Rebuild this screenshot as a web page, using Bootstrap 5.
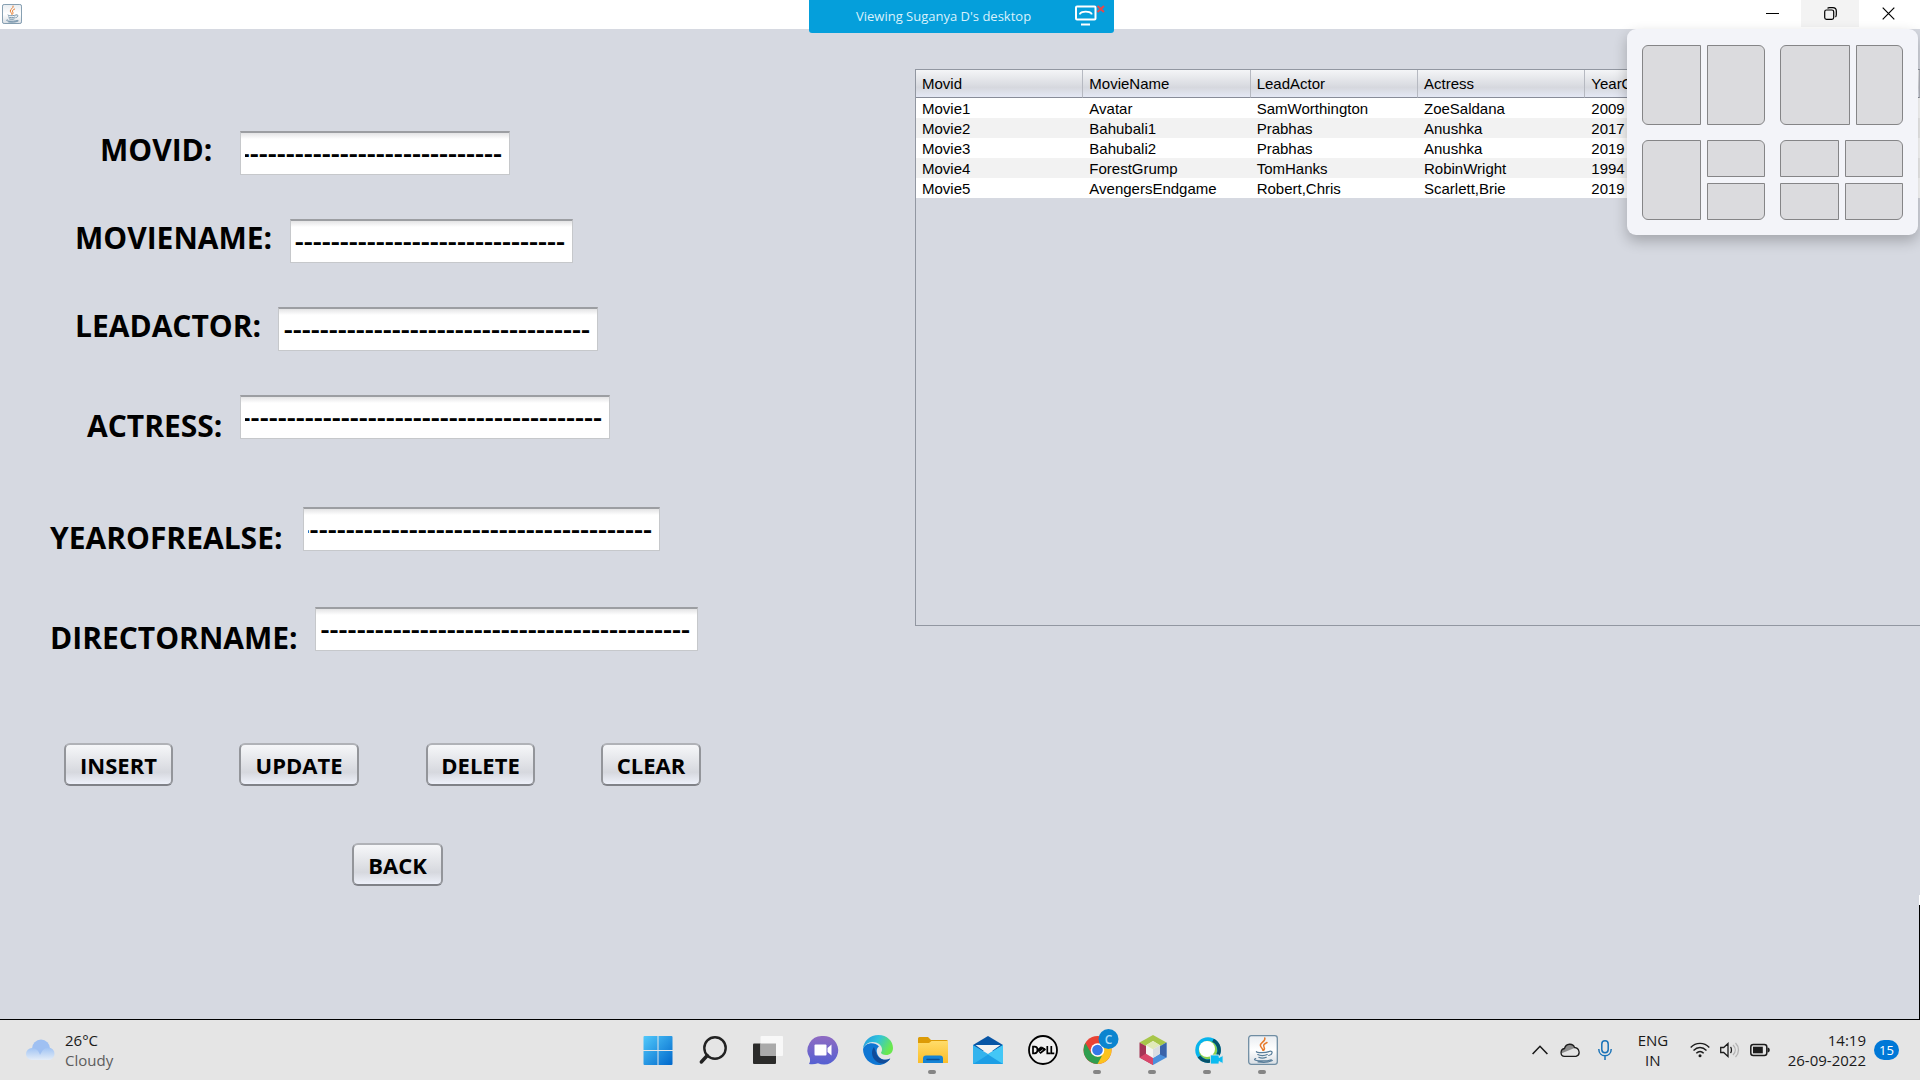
<!DOCTYPE html>
<html lang="en">
<head>
<meta charset="utf-8">
<meta name="viewport" content="width=device-width, initial-scale=1">
<title>Movie records</title>
<link href="https://cdn.jsdelivr.net/npm/bootstrap@5.3.0/dist/css/bootstrap.min.css" rel="stylesheet">
<style>
  body { background: #d6d9e1; color: #000; font-family: "Open Sans", "Noto Sans", sans-serif; }
  .titlebar { height: 29px; background: #fff; padding-left: 2px; padding-right: 3px; }
  .win-btn { width: 58px; height: 27px; border: 0; background: transparent; padding: 0; }
  .win-btn.hovered { background: #f3f3f3; }
  .share-bar { width: 305px; height: 33px; top: 0; left: 50%; margin-left: -151px; background: #059fdb; border-radius: 0 0 3px 3px; z-index: 3; color: #d9f1fb; font: 13px/33px "Open Sans", sans-serif; padding-left: 47px; padding-right: 8px; }

  /* right edge shows a strip of the screen behind the window */
  .workspace { background: linear-gradient(#fff 0 10px, #000 10px) right bottom / 1px 124px no-repeat; border-bottom: 1px solid #000; }
  .form-side { width: 915px; padding-top: 102px; }
  .entry { height: 44px; margin-bottom: 44px; }
  .entry label { font-size: 30px; font-weight: 700; line-height: 38px; white-space: nowrap; }
  .entry.low label { padding-top: 12px; }
  .entry input { height: 44px; border: 1px solid #c6c8cb; border-top: 2px solid #9c9ea2; border-radius: 0; background: linear-gradient(#e4e4e5, #fff 6px); padding: 0 7px 4px 4px; font: 600 28px/36px "Open Sans", "Noto Sans", sans-serif; color: #000; }
  .at-101 { padding-left: 100px; } .at-101 label { width: 140px; }
  .at-76 { padding-left: 75px; }
  .name label { width: 215px; }
  .actor label { width: 203px; }
  .at-87 { padding-left: 87px; } .at-87 label { width: 153px; }
  .at-50 { padding-left: 50px; }
  .year { margin-bottom: 56px; } .year label { width: 253px; }
  .actress { margin-bottom: 68px; }
  .director { margin-bottom: 92px; } .director label { width: 265px; }
  #movid { width: 270px; } #moviename { width: 283px; } #leadactor { width: 320px; }
  #actress { width: 370px; } #year { width: 357px; } #director { width: 383px; }

  .metal { height: 43px; border: 2px solid #93959a; border-top-color: #b0b2b7; border-bottom-color: #808288; border-radius: 6px; background: linear-gradient(#f6f7f9, #d6d8de 70%, #eef1fa); color: #000; font-size: 22px; font-weight: 700; line-height: 38px; padding: 1px 0 0; }
  .actions { padding-left: 64px; margin-bottom: 57px; }
  .w-108 { width: 109px; } .w-118 { width: 120px; } .w-99 { width: 100px; } .w-90 { width: 91px; }
  .gap-a { margin-right: 66px; } .gap-b { margin-right: 67px; }
  .back-row { padding-left: 352px; }

  .grid-pane { margin-top: 40px; height: 557px; border: 1px solid #9297a1; border-right: 0; }
  .movies { width: 100%; table-layout: fixed; font: 15px/20px "Liberation Sans", Arial, sans-serif; border-collapse: separate; border-spacing: 0; }
  .movies th { height: 28px; font-weight: 400; padding: 0 6px; border-right: 1px solid #b6b9c1; border-bottom: 1px solid #888c98; background: linear-gradient(#f4f5f7, #d6d8de 65%, #e4e8f4); white-space: nowrap; }
  .movies td { height: 20px; padding: 1px 6px 0; line-height: 19px; background: #fff; }
  .movies tr:nth-child(even) td { background: #f2f2f2; }

  .snap { top: 29px; right: 2px; width: 291px; height: 206px; padding: 16px 15px 15px; background: #f3f4f9; border-radius: 9px; box-shadow: 0 6px 14px rgba(0,0,0,.24); display: grid; grid-template-columns: 123px 123px; grid-template-rows: 80px 80px; gap: 15px; z-index: 4; }
  .zone { display: grid; gap: 6px; }
  .zone i { background: #dbdbde; border: 1px solid #858587; }
  .zone .tl { border-top-left-radius: 6px; } .zone .tr { border-top-right-radius: 6px; }
  .zone .bl { border-bottom-left-radius: 6px; } .zone .br { border-bottom-right-radius: 6px; }
  .halves { grid-template-columns: 59px 1fr; }
  .wide { grid-template-columns: 70px 1fr; }
  .quads { grid-template-columns: 59px 1fr; grid-template-rows: 1fr 1fr; }
  .tall { grid-row: span 2; }

  .taskbar { height: 60px; background: #e5e5e5; font-size: 15px; line-height: 20px; color: #1a1a1a; }
  .side { flex: 1 1 0; }
  .app { width: 55px; height: 60px; border: 0; background: transparent; padding: 0; position: relative; }
  .app svg { width: 30px; height: 30px; display: block; margin: 0 auto; overflow: visible; }
  .app.open::after { content: ""; position: absolute; bottom: 6px; left: 23px; width: 8px; height: 4px; border-radius: 2px; background: #858585; }
  .tray { padding-right: 21px; }
  .tray svg { display: block; flex: none; }
  .count { width: 25px; height: 20px; border-radius: 10px; background: #0078d7; color: #fff; font-size: 13px; margin-left: 8px; }
  .weather-icon { margin-left: 26px; margin-right: 9px; }
  .dim { color: #5c5c5c; }
  .ml-18 { margin-left: 18px; }
  .ml-12 { margin-left: 12px; }
  .ml-10 { margin-left: 10px; }
  .lang { width: 30px; margin-left: 26px; margin-right: 22px; }
</style>
<script src="https://cdn.jsdelivr.net/npm/bootstrap@5.3.0/dist/js/bootstrap.bundle.min.js"></script>
</head>
<body class="d-flex flex-column vh-100 overflow-hidden position-relative">

<svg width="0" height="0" class="position-absolute" aria-hidden="true">
  <defs>
    <linearGradient id="gBtn" x1="0" y1="0" x2="0" y2="1"><stop offset="0" stop-color="#e9edf1"/><stop offset=".5" stop-color="#fff"/><stop offset="1" stop-color="#d8dee4"/></linearGradient>
    <symbol id="java" viewBox="0 0 30 30">
      <rect x=".7" y=".7" width="28.6" height="28.6" rx="2.5" fill="url(#gBtn)" stroke="#6f8da3" stroke-width="1.3"/>
      <g fill="none" stroke-linecap="round">
        <path d="M16.800 3c1 3.400-4.700 4.600-4.400 7.500.2 1.900 2.200 2.500 2.400 4.800M19 7.500c-3 1.400-4 2.600-3 4.400.8 1.300.6 2.200-.3 3.400" stroke="#e77a2b" stroke-width="1.500"/>
        <path d="M8.500 16.600c-1 1.200 9.500 1.400 12.300 0M9.800 19.600c2 1.400 7 1.400 9.400 0M10.800 22.300c2 1 5 1 7.500 0M21.500 16.300c4-.8 3 3.500-.8 4.200M7.700 23.500c-5.200 2.200 9 3.500 15.500 1.200M24.300 25.500c-3.600 2-9.800 2.100-14.300 1.400" stroke="#587d99" stroke-width="1.200"/>
      </g>
    </symbol>
    <linearGradient id="gWin" x1="0" y1="0" x2="1" y2="1"><stop offset="0" stop-color="#51c9fb"/><stop offset="1" stop-color="#0067cb"/></linearGradient>
    <linearGradient id="gTeams" x1="0" y1="0" x2="0" y2="1"><stop offset="0" stop-color="#8f6bc2"/><stop offset="1" stop-color="#5560d2"/></linearGradient>
    <linearGradient id="gEdge" x1="0" y1="0" x2="1" y2=".4"><stop offset="0" stop-color="#2193dd"/><stop offset=".5" stop-color="#30c3dc"/><stop offset="1" stop-color="#6ae84f"/></linearGradient>
    <linearGradient id="gFold" x1="0" y1="0" x2="0" y2="1"><stop offset="0" stop-color="#ffdc6a"/><stop offset="1" stop-color="#fbbd28"/></linearGradient>
    <linearGradient id="gCloud" x1="0" y1="0" x2="0" y2="1"><stop offset="0" stop-color="#9fc2f3"/><stop offset="1" stop-color="#e4edf8"/></linearGradient>
  </defs>
</svg>

<header class="titlebar d-flex justify-content-between flex-shrink-0">
  <svg class="mt-1" width="20" height="20"><use href="#java"/></svg>
  <div class="d-flex">
    <button class="win-btn" type="button" aria-label="Minimize"><svg width="13" height="13" class="d-block mx-auto"><path d="M0 6.500h13" stroke="#000"/></svg></button>
    <button class="win-btn hovered" type="button" aria-label="Restore"><svg width="13" height="13" class="d-block mx-auto" fill="none" stroke="#000" stroke-width="1.200"><rect x=".7" y="3" width="9" height="9.300" rx="1.800"/><path d="M3.500 1.300c.5-.5 1-.6 2-.6h3.300c2.500 0 3.500 1.300 3.500 3.300V7.500c0 1.300-.2 2-.8 2.500"/></svg></button>
    <button class="win-btn" type="button" aria-label="Close"><svg width="13" height="13" class="d-block mx-auto"><path d="M.7.7l11.600 11.600M12.300.7L.7 12.300" stroke="#000" stroke-width="1.200"/></svg></button>
  </div>
</header>

<div class="share-bar position-absolute d-flex justify-content-between">
  <span>Viewing Suganya D's desktop</span>
  <svg width="32" height="24" viewBox="0 0 32 24" fill="none" class="mt-1">
    <rect x="2" y="2.500" width="19.500" height="13" rx="1" stroke="#fff" stroke-width="2"/>
    <path d="M7 20.500h9" stroke="#fff" stroke-width="2"/>
    <path d="M6 10.500v-1c2-2.500 9.500-2.500 11.500 0v1" stroke="#fff" stroke-width="1.800"/>
    <path d="M23.500 2l6.500 6M30 2l-6.500 6" stroke="#e5484a" stroke-width="2"/>
  </svg>
</div>

<main class="workspace d-flex flex-grow-1 align-items-start">
  <form class="form-side flex-shrink-0 align-self-stretch">
    <div class="entry at-101 d-flex"><label for="movid">MOVID:</label><input id="movid" dir="rtl" type="text" value="-----------------------------"></div>
    <div class="entry at-76 name d-flex"><label for="moviename">MOVIENAME:</label><input id="moviename" dir="rtl" type="text" value="------------------------------"></div>
    <div class="entry at-76 actor d-flex"><label for="leadactor">LEADACTOR:</label><input id="leadactor" dir="rtl" type="text" value="----------------------------------"></div>
    <div class="entry at-87 actress low d-flex"><label for="actress">ACTRESS:</label><input id="actress" dir="rtl" type="text" value="----------------------------------------"></div>
    <div class="entry at-50 year low d-flex"><label for="year">YEAROFREALSE:</label><input id="year" dir="rtl" type="text" value="---------------------------------------"></div>
    <div class="entry at-50 director low d-flex"><label for="director">DIRECTORNAME:</label><input id="director" dir="rtl" type="text" value="-----------------------------------------"></div>
    <div class="actions d-flex">
      <button type="button" class="metal w-108 gap-a">INSERT</button>
      <button type="button" class="metal w-118 gap-b">UPDATE</button>
      <button type="button" class="metal w-108 gap-a">DELETE</button>
      <button type="button" class="metal w-99">CLEAR</button>
    </div>
    <div class="back-row d-flex"><button type="button" class="metal w-90">BACK</button></div>
  </form>

  <section class="grid-pane flex-grow-1">
    <table class="movies">
      <thead><tr><th>Movid</th><th>MovieName</th><th>LeadActor</th><th>Actress</th><th>YearOfRealse</th><th></th></tr></thead>
      <tbody>
        <tr><td>Movie1</td><td>Avatar</td><td>SamWorthington</td><td>ZoeSaldana</td><td>2009</td><td></td></tr>
        <tr><td>Movie2</td><td>Bahubali1</td><td>Prabhas</td><td>Anushka</td><td>2017</td><td></td></tr>
        <tr><td>Movie3</td><td>Bahubali2</td><td>Prabhas</td><td>Anushka</td><td>2019</td><td></td></tr>
        <tr><td>Movie4</td><td>ForestGrump</td><td>TomHanks</td><td>RobinWright</td><td>1994</td><td></td></tr>
        <tr><td>Movie5</td><td>AvengersEndgame</td><td>Robert,Chris</td><td>Scarlett,Brie</td><td>2019</td><td></td></tr>
      </tbody>
    </table>
  </section>
</main>

<aside class="snap position-absolute" aria-label="Snap layouts">
  <div class="zone halves"><i class="tl bl"></i><i class="tr br"></i></div>
  <div class="zone wide"><i class="tl bl"></i><i class="tr br"></i></div>
  <div class="zone quads"><i class="tl bl tall"></i><i class="tr"></i><i class="br"></i></div>
  <div class="zone quads"><i class="tl"></i><i class="tr"></i><i class="bl"></i><i class="br"></i></div>
</aside>

<footer class="taskbar d-flex align-items-center flex-shrink-0">
  <div class="side d-flex align-items-center">
    <svg width="30" height="22" viewBox="0 0 30 22" class="weather-icon"><circle cx="15" cy="9.500" r="9" fill="#9fc0f2"/><path d="M6 21a6 6 0 010-12c4 0 7 3 8 7 2-4 4-7.500 9-7.500a6.300 6.300 0 010 12.500z" fill="url(#gCloud)"/></svg>
    <div><div>26°C</div><div class="dim">Cloudy</div></div>
  </div>

  <nav class="d-flex" aria-label="Taskbar apps">
    <button class="app" type="button" aria-label="Start"><svg viewBox="0 0 30 30"><path d="M.5 2a1 1 0 011-1h13v14H.5zM15.500 1h13a1 1 0 011 1v13h-14zM.5 16h14v14h-13a1 1 0 01-1-1zM15.500 16h14v13a1 1 0 01-1 1h-13z" fill="url(#gWin)"/></svg></button>
    <button class="app" type="button" aria-label="Search"><svg viewBox="0 0 30 30" fill="none" stroke="#222"><circle cx="17" cy="13" r="10.700" stroke-width="2.400"/><path d="M9.300 20.500L3.300 27" stroke-width="3.400" stroke-linecap="round"/></svg></button>
    <button class="app" type="button" aria-label="Task view"><svg viewBox="0 0 30 30"><rect x="0" y="8.500" width="23" height="20.500" rx="1" fill="#2b2b2a"/><rect x="7.500" y="1" width="22.500" height="20" rx="1" fill="#f8f8f8"/><path d="M7.500 8.500H23V21H7.500z" fill="#aaa"/></svg></button>
    <button class="app" type="button" aria-label="Chat"><svg viewBox="0 0 30 30"><path d="M15 1a14.300 14.300 0 11-5 27.300c-3 1-6 1-9 .7 1.200-2 1.300-4 .8-6A14.300 14.300 0 0115 1z" fill="url(#gTeams)"/><rect x="6.500" y="9.500" width="12" height="11" rx="1" fill="#fff"/><path d="M19.500 13l4-3.500v11l-4-3.500z" fill="#fff"/></svg></button>
    <button class="app" type="button" aria-label="Edge"><svg viewBox="0 0 30 30"><path d="M0 14C0 23 7 30 15.500 30c5 0 9-2.500 11.700-6.500C21 27 15 23 14 18c-1-4 1-6 2-6.500C11 6 2 8 0 14z" fill="#0f76d3"/><path d="M11 12c-5 6 0 17 9.500 16.500 3-.8 5.200-2.600 6.800-5C21 27 14 23 13 17.500z" fill="#114c99"/><path d="M0 14C.5 6 7 0 15.500 0 24 0 30 6 30 13c0 4.500-3 7-7 7-3 0-5-1-5-2.200 0-.8 1-1.200 1-3.300C19 10 14.500 7 9.500 7 5 7 1.500 10 0 14z" fill="url(#gEdge)"/></svg></button>
    <button class="app open" type="button" aria-label="File Explorer"><svg viewBox="0 0 30 30"><path d="M0 3.500a1.500 1.500 0 011.500-1.500H10l3 3h15.500A1.500 1.500 0 0130 6.500V10H0z" fill="#dc9b06"/><path d="M0 8h11l2.500-2H30v22H0z" fill="url(#gFold)"/><path d="M5 28v-4.500a3 3 0 013-3h14a3 3 0 013 3V28z" fill="#1583d5"/><path d="M9 24.500h12" stroke="#0a4f93" stroke-width="1.500" stroke-linecap="round"/></svg></button>
    <button class="app" type="button" aria-label="Mail"><svg viewBox="0 0 30 30"><path d="M0 10L15 1l15 9v6H0z" fill="#0755a5"/><path d="M2.500 10h25L15 19z" fill="#f2f2f2"/><path d="M0 10l15 9L30 10v19H0z" fill="#33b3ed"/><path d="M0 29l30-19v19z" fill="#43c7f6"/><path d="M0 29l15-9.500L30 29z" fill="#1c9ee5"/></svg></button>
    <button class="app" type="button" aria-label="Dell"><svg viewBox="0 0 30 30"><circle cx="15" cy="15" r="14" fill="#f0f0f0" stroke="#000" stroke-width="1.800"/><g fill="none" stroke="#000" stroke-width="1.700"><path d="M5 11.700v6.600h1.500c4 0 4-6.600 0-6.600zM19.300 11v7.300h3M23.300 11v7.300h3"/><path d="M9.700 15l4-3M10.500 16.500l5-4M12 18.300l5.500-4.300M10 15l3 3.300M14 12.500l3 2.500"/></g></svg></button>
    <button class="app open" type="button" aria-label="Chrome"><svg viewBox="0 0 30 30"><circle cx="14.500" cy="15" r="14" fill="#e94335"/><path d="M14.500 15L14 29a14 14 0 0012.600-21H16z" fill="#fcc31e"/><path d="M2.400 8l6 10.500 6 3.500 4.500-1-4.400 8A14 14 0 012.400 8z" fill="#2f9e4f"/><circle cx="14.500" cy="15" r="6.800" fill="#fff"/><circle cx="14.500" cy="15" r="5.300" fill="#3578e8"/><circle cx="25.500" cy="4" r="10" fill="#0b84cf"/><text x="25.500" y="8.500" text-anchor="middle" font-family="Open Sans" font-size="12" font-weight="600" fill="#a9dcfa">C</text></svg></button>
    <button class="app open" type="button" aria-label="NetBeans"><svg viewBox="0 0 30 30"><path d="M15 0l13.500 7.500L15 15 1.500 7.500z" fill="#a7c649"/><path d="M1.500 7.500L15 15v15L1.500 22.500z" fill="#a43455"/><path d="M1.500 22.500L8 18.500l7 4V30z" fill="#d9476a"/><path d="M28.500 7.500L15 15v15l13.500-7.500z" fill="#4a90dc"/><path d="M28.500 7.500l-6.500 4v8l6.500 3z" fill="#3a63a9"/><path d="M15 6l7 4.300v8.400L15 23l-7-4.300v-8.400z" fill="#f3f4f1"/><path d="M15 6l7 4.300-7 4-7-4z" fill="#e1eaba"/><path d="M15 14.300l7-4v8.400L15 23z" fill="#d9dde2"/></svg></button>
    <button class="app open" type="button" aria-label="Webex"><svg viewBox="0 0 30 30"><circle cx="15" cy="15" r="11" fill="#8cd04c" stroke="#08b4ec" stroke-width="3.500"/><path d="M20 5.200A11 11 0 0125 20M6 21.500A11 11 0 0020 25" fill="none" stroke="#07526a" stroke-width="3.500"/><circle cx="14" cy="14" r="8" fill="#fff"/><path d="M17.500 20h8.500v2.500l4-2v8l-4-2V29h-8.500z" fill="#0cbbf0" stroke="#e5e5e5" stroke-width=".8"/></svg></button>
    <button class="app open" type="button" aria-label="Java"><svg><use href="#java"/></svg></button>
  </nav>

  <div class="side d-flex justify-content-end">
    <div class="tray d-flex align-items-center">
      <svg width="16" height="10" fill="none" stroke="#1a1a1a" stroke-width="1.600"><path d="M.6 9L8 1.300 15.400 9"/></svg>
      <svg width="20" height="14" viewBox="0 0 20 14" class="ml-12"><path d="M4.500 13.300C0 13 0 6.500 4.500 6 6 0 13 0 14.500 4.500c5 0 6.500 7.500 1.500 8.800z" fill="#e4e4e4"/><path d="M1.200 10.500L14.500 5C13-.2 6-.2 4.500 5.500 2.500 6 1 8 1.200 10.500z" fill="#8b8b8b"/><path d="M4.500 13.300C-.2 13 0 6.300 4.500 5.500 6 0 13 0 14.500 4.500c5 .3 6.500 7.500 1.500 8.800z" fill="none" stroke="#1c1c1c" stroke-width="1.300"/></svg>
      <svg width="14" height="20" class="ml-18" fill="none" stroke="#1a73b8" stroke-width="1.500"><rect x="3.800" y=".8" width="6.400" height="12" rx="3.200"/><path d="M.8 9c0 9 12.400 9 12.400 0M7 15.800V20"/></svg>
      <div class="lang text-center"><div>ENG</div><div>IN</div></div>
      <svg width="20" height="16" viewBox="0 0 20 16" fill="none" stroke="#1c1c1c" stroke-width="1.400"><path d="M.7 5.500c5-5.500 13.600-5.500 18.600 0M3.500 8.500c4-4 9-4 13 0M6.300 11.300c2.500-2.500 5-2.500 7.400 0"/><circle cx="10" cy="13.700" r="1.500" fill="#1c1c1c" stroke="none"/></svg>
      <svg width="20" height="16" viewBox="0 0 20 16" class="ml-10" fill="none" stroke="#1c1c1c" stroke-width="1.300"><path d="M.7 5.500h3L8 1.500v13l-4.300-4h-3zM10.500 5c1.300 1.500 1.300 4.500 0 6"/><path d="M13 3c3 3 3 7 0 10M15.500 1c4 4 4 10 0 14" stroke="#b3b3b3"/></svg>
      <svg width="20" height="14" viewBox="0 0 20 14" class="ml-10"><rect x=".8" y="1.500" width="16" height="11" rx="2.500" fill="none" stroke="#1c1c1c" stroke-width="1.500"/><rect x="3" y="3.700" width="9.800" height="6.600" fill="#1c1c1c"/><path d="M17.500 4.500c3 0 3 5 0 5z" fill="#1c1c1c"/></svg>
      <div class="text-end ml-18"><div>14:19</div><div>26-09-2022</div></div>
      <div class="count text-center flex-shrink-0">15</div>
    </div>
  </div>
</footer>
</body>
</html>
